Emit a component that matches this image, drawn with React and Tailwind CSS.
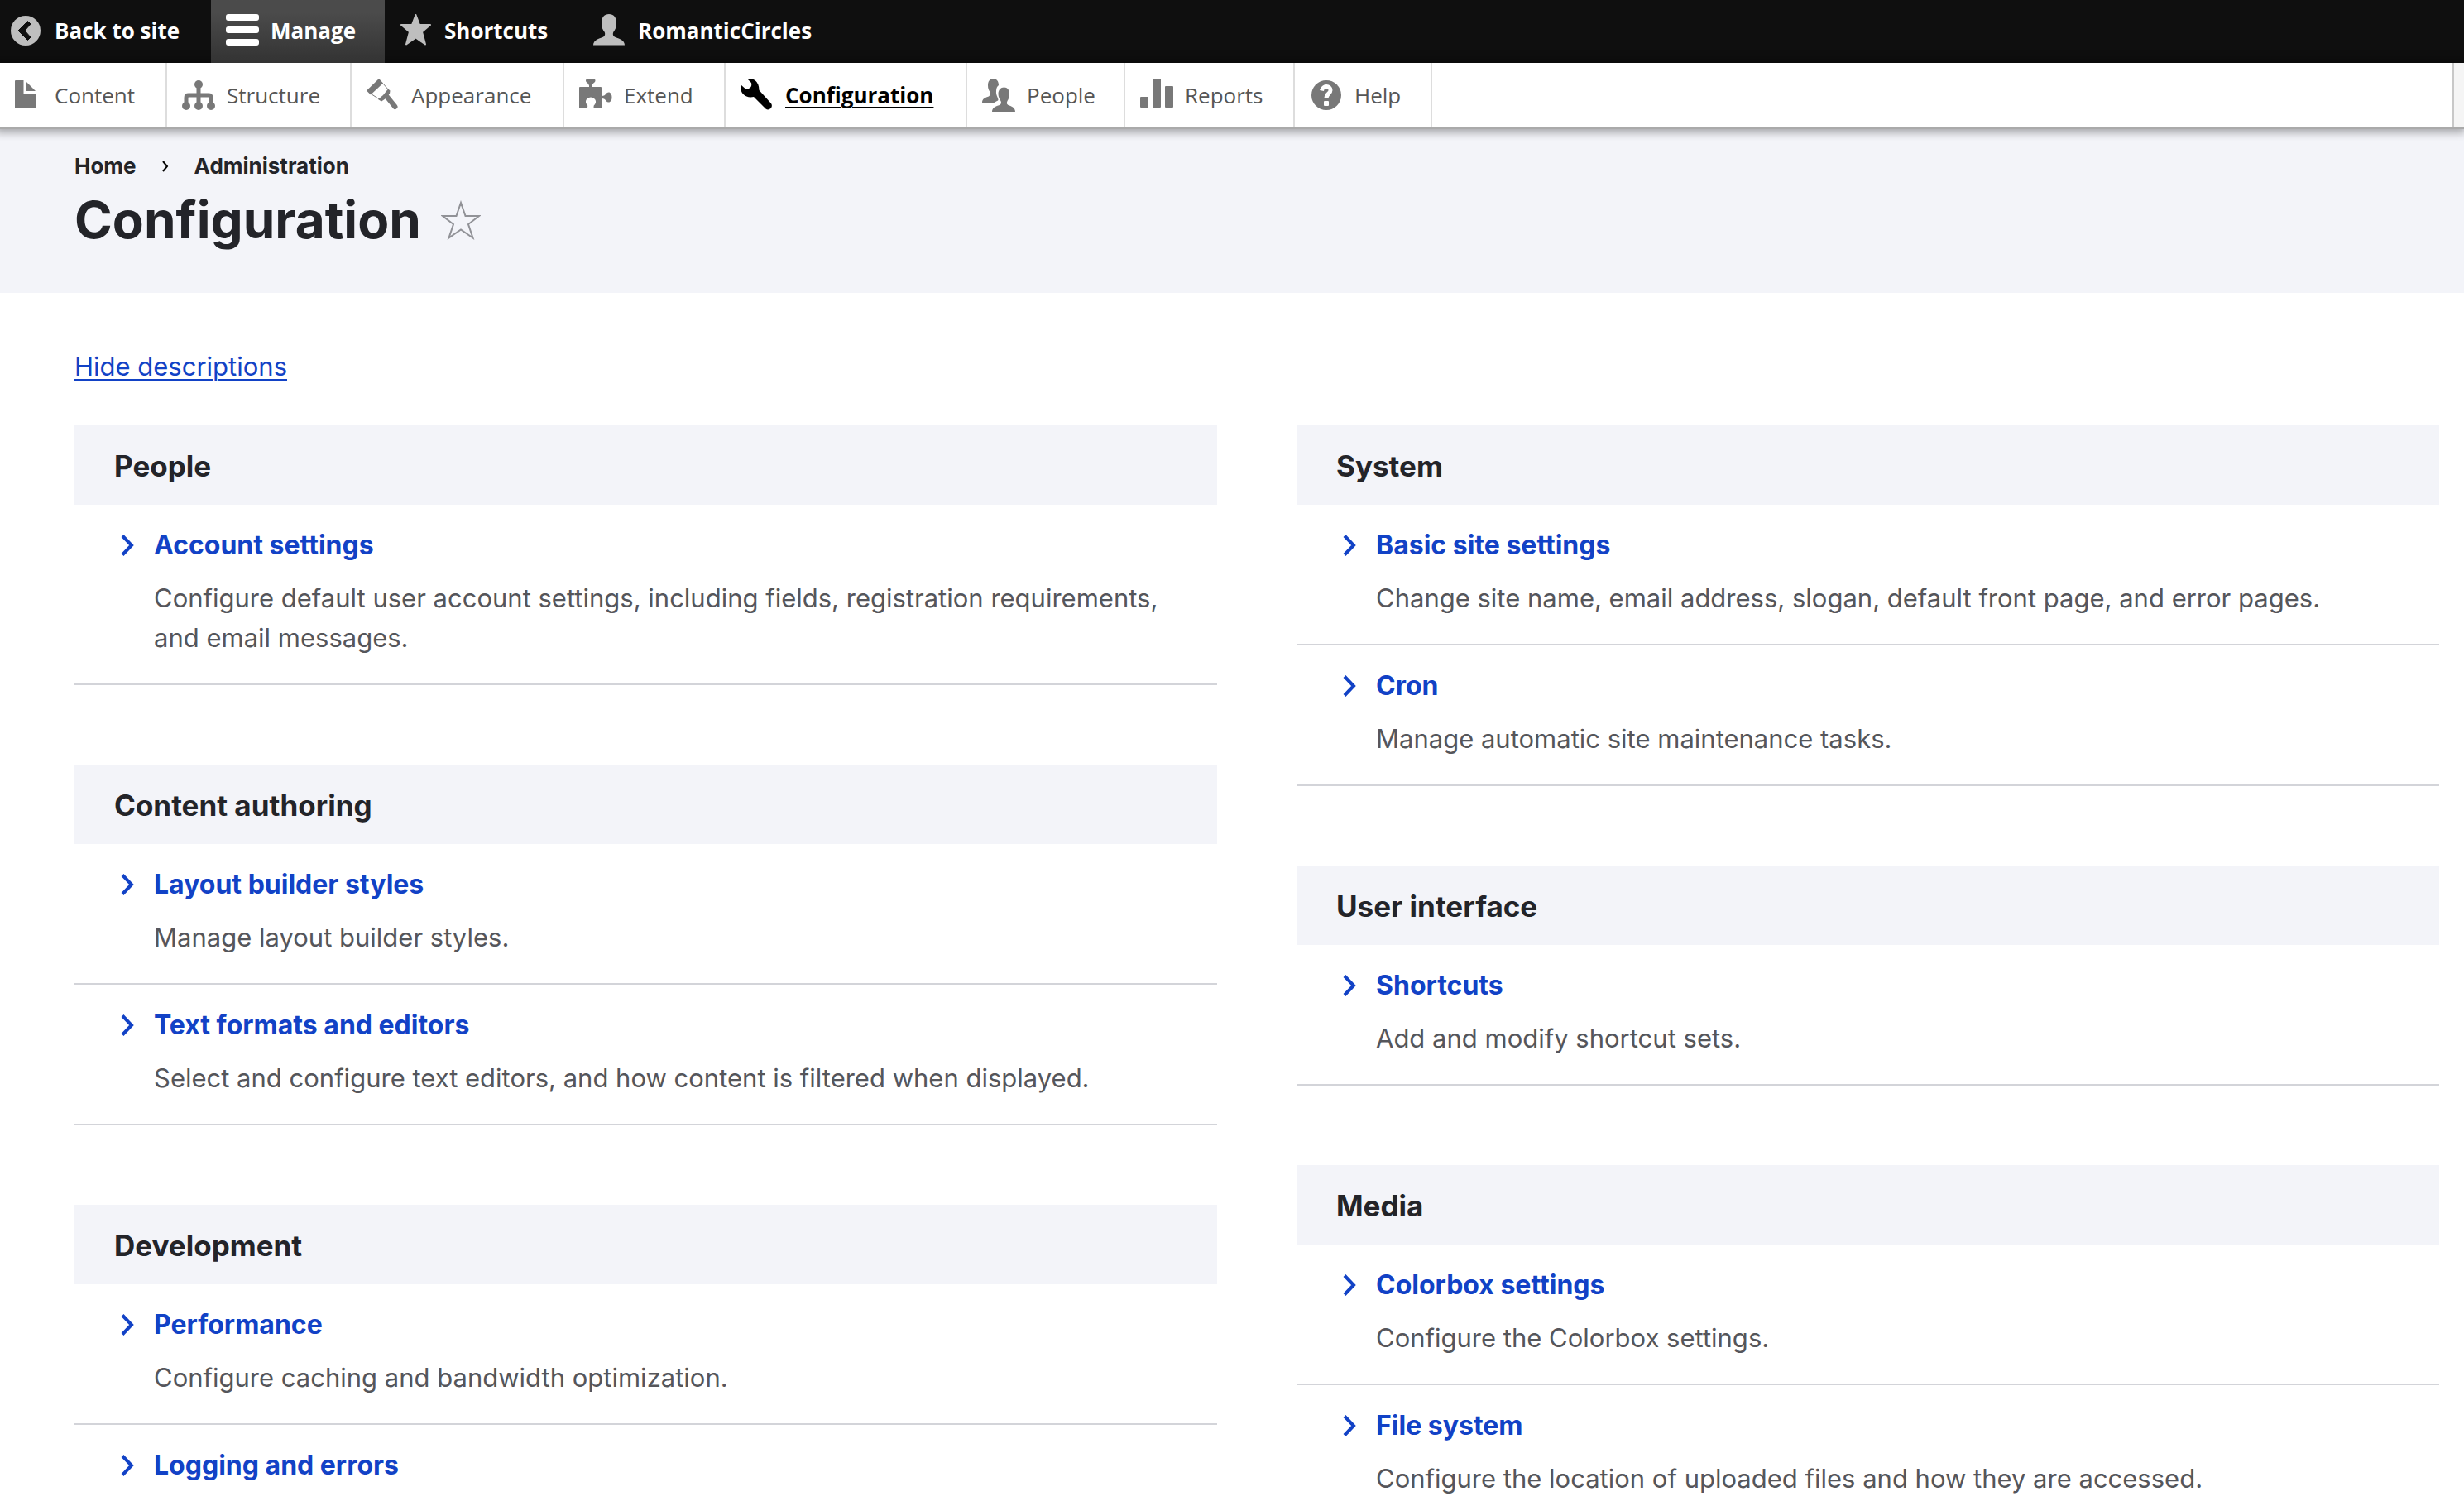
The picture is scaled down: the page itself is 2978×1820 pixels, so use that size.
import React from "react";

const sections = [
  [
    {
      title: "People",
      items: [
        ["Account settings", "Configure default user account settings, including fields, registration requirements, and email messages."],
      ],
    },
    {
      title: "Content authoring",
      items: [
        ["Layout builder styles", "Manage layout builder styles."],
        ["Text formats and editors", "Select and configure text editors, and how content is filtered when displayed."],
      ],
    },
    {
      title: "Development",
      items: [
        ["Performance", "Configure caching and bandwidth optimization."],
        ["Logging and errors", ""],
      ],
    },
  ],
  [
    {
      title: "System",
      items: [
        ["Basic site settings", "Change site name, email address, slogan, default front page, and error pages."],
        ["Cron", "Manage automatic site maintenance tasks."],
      ],
    },
    {
      title: "User interface",
      items: [["Shortcuts", "Add and modify shortcut sets."]],
    },
    {
      title: "Media",
      items: [
        ["Colorbox settings", "Configure the Colorbox settings."],
        ["File system", "Configure the location of uploaded files and how they are accessed."],
      ],
    },
  ],
];

const person =
  "M19 0C13.5 0 10 4 10 10.500C10 16 11.500 19 13.500 21.500C14.500 23 14.500 25.500 13 27C9 29.500 0 30.500 0 37.500H38C38 30.500 29 29.500 25 27C23.500 25.500 23.500 23 24.500 21.500C26.500 19 28 16 28 10.500C28 4 24.500 0 19 0Z";

const icons = {
  back: (
    <>
      <circle cx="19" cy="20" r="18" />
      <path fill="#0f0f0f" d="M10 20L21.500 8.500L25 12L18 20L25 28L21.500 31.500Z" stroke="#0f0f0f" strokeLinejoin="round" />
    </>
  ),
  menu: (
    <>
      <rect y="0" width="40" height="8" rx="3" />
      <rect y="15" width="40" height="8" rx="3" />
      <rect y="30" width="40" height="8" rx="3" />
    </>
  ),
  star: (
    <path
      strokeWidth="2"
      stroke="currentColor"
      strokeLinejoin="round"
      d="M19.500 1L24 13H37L27 21.500L31 36.500L19.500 28.500L8 36.500L12 21.500L2 13H15Z"
    />
  ),
  user: <path d={person} />,
  content: (
    <>
      <path d="M6 3Q6 2 7 2H16.500V18H32V35H6Z" />
      <path d="M19 3L31 15H19Z" />
    </>
  ),
  structure: (
    <>
      <circle cx="20" cy="7" r="5" />
      <circle cx="5" cy="33" r="5" />
      <circle cx="20" cy="33" r="5" />
      <circle cx="35" cy="33" r="5" />
      <path d="M20 7V33M5 33V23Q5 20 8 20H32Q35 20 35 23V33" fill="none" stroke="currentColor" strokeWidth="5" />
    </>
  ),
  appearance: (
    <>
      <path d="M15 0L20 5.500L5 19.500L0 14.500Z" />
      <path d="M19.500 5.500L27 14L18 26.500L5.500 18.500" fill="none" stroke="currentColor" strokeWidth="1" />
      <path d="M26 12.500L28.500 14.500L28 18L22.500 24.500L18 27.500L14 25L20 20Z" />
      <path d="M24 21L34.500 34" fill="none" stroke="currentColor" strokeWidth="6" strokeLinecap="round" />
    </>
  ),
  extend: (
    <path d="M0 11Q0 10 1 10H12Q12.500 7 9 4.500Q7 2.500 9 0H18.500Q20.500 2.500 18.500 4.500Q15 7 15.500 10H26Q27.500 10 27.500 11.500V21Q31 21 32.500 18Q34 16 36.500 16.500Q39.500 18 39.500 22.500Q39.500 27 36.500 28.500Q34 29 32.500 27Q31 24 27.500 24V35H17.500Q17 32.500 19 31Q20.500 29.500 20 27Q19 23 14 22.500Q9 23 8 27Q7.500 29.500 9 31Q11 32.500 10 35H0Z" />
  ),
  configuration: (
    <path d="M8.500 0.500Q13 -1 17.500 2Q22.500 6 22.500 14L37 30Q39 33 36.500 36Q33.500 38.500 30.500 36.500L16 22Q8 23.500 3.500 19Q-1 14.500 0.500 7.500L5 11.500Q9 13.500 11.500 11Q14 9 13 5Z" />
  ),
  people: (
    <>
      <path d="M13.500 0C9.500 0 7 3 7 8C7 12 8 14 9.500 16C10.500 18 10 20 8 21.500C4 23 0 24 0 29H14.500C17 27.500 18.500 27 19.500 26C19.500 23 16.500 20 17 15C17 11.500 18 9.500 20 8C20 3 17.500 0 13.500 0Z" />
      <path d="M26.500 10.500C22.500 10.500 19.500 13.500 19.500 18.500C19.500 22 21 25 22.500 27C23.500 29 23 31 21 32C17 33.500 12 34.500 12 40H40C40 34.500 35 33.500 31.500 32C29.500 31 29.500 29 30.500 27C32 25 33 22 33 18.500C33 13.500 30.500 10.500 26.500 10.500Z" />
    </>
  ),
  reports: (
    <>
      <rect y="22" width="10" height="13" rx="1" />
      <rect x="15" y="0" width="10" height="35" rx="1" />
      <rect x="30" y="9" width="10" height="26" rx="1" />
    </>
  ),
  help: (
    <>
      <circle cx="20" cy="20" r="18" />
      <path d="M14.500 14.500C15.500 8 25 8 25 14C25 18 20 18 20 24" fill="none" stroke="#fff" strokeWidth="5" />
      <rect x="17" y="27" width="6" height="6" rx="1" fill="#fff" />
    </>
  ),
};

function Icon({ name, className }) {
  return (
    <svg viewBox="0 0 40 40" className={"size-10 shrink-0 overflow-visible " + className} fill="currentColor" aria-hidden="true">
      {icons[name]}
    </svg>
  );
}

const bar = [
  ["back", "Back to site", "-ml-1.5 w-[261px]"],
  ["menu", "Manage", "w-[210px]"],
  ["star", "Shortcuts", "w-[234px]"],
  ["user", "RomanticCircles", ""],
];

const tray = [
  ["content", "Content", "-ml-1.5 w-[208px]"],
  ["structure", "Structure", "w-[223px]"],
  ["appearance", "Appearance", "w-[257px]"],
  ["extend", "Extend", "w-[195px]"],
  ["configuration", "Configuration", "w-[292px]"],
  ["people", "People", "w-[191px]"],
  ["reports", "Reports", "w-[205px]"],
  ["help", "Help", "w-[166px]"],
];

function Toolbar() {
  return (
    <div className="relative z-10 font-['Open_Sans','Noto_Sans',sans-serif] text-[26px] leading-9">
      <nav aria-label="Toolbar" className="flex h-[76px] bg-[#0f0f0f] font-bold text-white">
        {bar.map(([icon, label, size]) => (
          <a
            key={label}
            href="#"
            className={
              "flex items-center gap-3.5 pb-0.5 pl-[18px] whitespace-nowrap " +
              size +
              (icon === "menu" ? " bg-linear-to-b from-[#4b4b4b] from-20% to-[#333]" : "")
            }
          >
            <Icon name={icon} className={icon === "menu" ? "text-white" : "text-[#bebebe]"} />
            {label}
          </a>
        ))}
      </nav>
      <nav
        aria-label="Administration menu"
        className="flex h-20 border-b-2 border-[#aaa] bg-white text-[#565656] shadow-[-2px_0_10px_4px_rgba(0,0,0,0.33)]"
      >
        {tray.map(([icon, label, size]) => (
          <a
            key={label}
            href="#"
            className={
              "flex items-center gap-3.5 border-r-2 border-[#ddd] pl-[18px] whitespace-nowrap " +
              size +
              (icon === "configuration" ? " font-bold text-black" : "")
            }
          >
            <Icon name={icon} className={icon === "configuration" ? "text-black" : "text-[#787878]"} />
            <span className={icon === "configuration" ? "underline decoration-1 underline-offset-4" : ""}>{label}</span>
          </a>
        ))}
        <button aria-label="Vertical orientation" className="ml-auto w-3.5 border-l-2 border-[#c8c8c8] bg-[#f5f5f5]" />
      </nav>
    </div>
  );
}

function Panel({ title, items }) {
  return (
    <section>
      <h2 className="bg-[#f3f4f9] px-12 pt-[25px] pb-[23px] text-[35px] leading-12 font-bold">{title}</h2>
      <ul>
        {items.map(([name, text]) => (
          <li key={name} className="border-b-2 border-[#d3d4d9] pt-[25px] pr-12 pb-[31px] pl-14">
            <a href="#" className="flex items-center gap-6 text-[32px] leading-12 font-bold text-[#1242c6]">
              <svg viewBox="0 0 16 26" className="h-[26px] w-4" fill="none" stroke="currentColor" strokeWidth="4" aria-hidden="true">
                <path d="M2 1.500L13 13L2 24.500" />
              </svg>
              {name}
            </a>
            {text && <p className="mt-4 pl-10 leading-12 text-[#55565b]">{text}</p>}
          </li>
        ))}
      </ul>
    </section>
  );
}

export default function App() {
  return (
    <div className="h-screen overflow-hidden bg-white font-['Inter',sans-serif] text-[31px] text-[#232429]">
      <Toolbar />
      <header className="bg-[#f3f4f9] pt-[25px] pr-[30px] pb-12 pl-[90px]">
        <nav aria-label="Breadcrumb" className="flex items-center text-[26px] leading-10 font-bold">
          <a href="#">Home</a>
          <svg viewBox="0 0 8 14" className="mx-[31px] h-3.5 w-2" fill="none" stroke="#000" strokeWidth="2" aria-hidden="true">
            <path d="M1 1L6 7L1 13" />
          </svg>
          <a href="#">Administration</a>
        </nav>
        <div className="mt-[5px] flex items-center gap-6">
          <h1 className="text-[62px] leading-20 font-bold">Configuration</h1>
          <button aria-label="Add to shortcuts">
            <svg viewBox="0 0 48 48" className="size-12" fill="none" stroke="#919297" strokeWidth="2" aria-hidden="true">
              <path d="M24 3L29.500 19H46L33 29L38.500 45.500L24 35.500L9.500 45.500L15 29L2 19H18.500Z" />
            </svg>
          </button>
        </div>
      </header>
      <main className="pt-[65px] pr-[30px] pl-[90px]">
        <a href="#" className="leading-12 text-[#1242c6] underline decoration-2 underline-offset-4">
          Hide descriptions
        </a>
        <div className="mt-[47px] grid grid-cols-2 gap-24">
          {sections.map((column, i) => (
            <div key={i} className="flex flex-col gap-24">
              {column.map((s) => (
                <Panel key={s.title} {...s} />
              ))}
            </div>
          ))}
        </div>
      </main>
    </div>
  );
}
